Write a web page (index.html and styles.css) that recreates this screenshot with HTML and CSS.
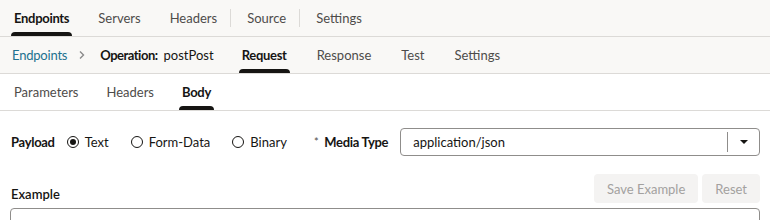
FILE: index.html
```html
<!DOCTYPE html>
<html>
<head>
<meta charset="utf-8">
<link rel="stylesheet" href="styles.css">
</head>
<body>
<div class="page">
  <nav class="bar bar-top">
    <a class="tab active">Endpoints</a>
    <a class="tab">Servers</a>
    <a class="tab">Headers</a>
    <span class="sep"></span>
    <a class="tab">Source</a>
    <span class="sep"></span>
    <a class="tab">Settings</a>
  </nav>
  <nav class="bar bar-second">
    <a class="crumb">Endpoints</a>
    <svg class="chev" width="8" height="10" viewBox="0 0 8 10"><path d="M2 1.5 L5.5 5 L2 8.5" fill="none" stroke="#8a8a8a" stroke-width="1.4"/></svg>
    <span class="op"><b>Operation:</b> postPost</span>
    <a class="tab active">Request</a>
    <a class="tab">Response</a>
    <a class="tab">Test</a>
    <a class="tab">Settings</a>
  </nav>
  <nav class="bar bar-third">
    <a class="tab">Parameters</a>
    <a class="tab">Headers</a>
    <a class="tab active">Body</a>
  </nav>
  <div class="form-row">
    <span class="label">Payload</span>
    <label class="radio checked"><span class="circle"></span>Text</label>
    <label class="radio"><span class="circle"></span>Form-Data</label>
    <label class="radio"><span class="circle"></span>Binary</label>
    <span class="label req"><span class="star">*</span>Media Type</span>
    <div class="select">
      <span class="value">application/json</span>
      <span class="arrow"><svg width="10" height="6" viewBox="0 0 10 6"><path d="M1 1 L9 1 L5 5 Z" fill="#161513"/></svg></span>
    </div>
  </div>
  <div class="example-row">
    <span class="label">Example</span>
    <div class="buttons">
      <button class="btn">Save Example</button>
      <button class="btn">Reset</button>
    </div>
  </div>
  <div class="editor"></div>
</div>
</body>
</html>
```
FILE: styles.css
```css
* { box-sizing: border-box; }
html, body { margin: 0; padding: 0; background: #fff; }
body {
  font-family: Lato, "Noto Sans", sans-serif;
  font-size: 13px;
  color: #161513;
  width: 770px;
  height: 220px;
  overflow: hidden;
}
.page { height: 220px; overflow: hidden; }
.bar {
  display: flex;
  align-items: stretch;
  border-bottom: 1px solid #dcdad7;
}
.bar-top { background: #f9f8f6; height: 37px; padding-left: 14px; }
.bar-second { background: #f9f8f6; height: 37px; padding-left: 12px; }
.bar-third { background: #fff; height: 37px; padding-left: 14px; }
.tab {
  position: relative;
  display: flex;
  align-items: center;
  color: #4e4c4a;
  margin-right: 30px;
  white-space: nowrap;
}
.bar-top .tab { margin-right: 29px; }
.bar-third .tab { margin-right: 28px; }
.tab.active { color: #161513; font-weight: 700; letter-spacing: -0.3px; }
.tab.active::after {
  content: "";
  position: absolute;
  left: -3px; right: -3px; bottom: 0;
  height: 4px;
  background: #161513;
  border-radius: 4px 4px 0 0;
}
.sep {
  width: 1px;
  background: #dcdad7;
  margin: 9px 16px 9px -16px;
}
.crumb { display: flex; align-items: center; color: #22718f; letter-spacing: -0.2px; }
.chev { align-self: center; margin: 0 14px 0 11px; }
.op { display: flex; align-items: center; gap: 6px; margin-right: 28px; }
.op b { font-weight: 700; letter-spacing: -0.5px; }
.form-row {
  display: flex;
  align-items: center;
  height: 28px;
  margin-top: 17px;
  padding: 0 10px 0 11px;
}
.label { font-weight: 700; letter-spacing: -0.3px; }
.form-row > .label:first-child { margin-right: 12px; }
.radio { display: flex; align-items: center; margin-right: 22px; color: #161513; }
.circle {
  width: 12px; height: 12px;
  border: 1.3px solid #161513;
  border-radius: 50%;
  margin-right: 6px;
  display: flex; align-items: center; justify-content: center;
}
.radio.checked .circle::after {
  content: ""; width: 6px; height: 6px; border-radius: 50%; background: #161513;
}
.req { display: flex; align-items: center; margin-left: 5px; }
.star { color: #4e4c4a; font-weight: 400; font-size: 11px; margin-right: 6px; align-self: flex-start; margin-top: 1px; }
.select {
  flex: 1;
  margin-left: 12px;
  height: 28px;
  border: 1px solid #8f8d8b;
  border-radius: 4px;
  display: flex;
  align-items: center;
}
.value { flex: 1; padding-left: 12px; }
.arrow {
  width: 32px; height: 20px;
  border-left: 1px solid #8f8d8b;
  display: flex; align-items: center; justify-content: center;
}
.example-row {
  display: flex;
  align-items: flex-end;
  justify-content: space-between;
  padding: 0 10px 0 11px;
  margin-top: 18px;
  height: 29px;
}
.example-row .label { font-weight: 600; line-height: 18px; letter-spacing: 0; }
.buttons { display: flex; gap: 4px; }
.btn {
  font: inherit;
  background: #f4f3f2;
  color: #a3a19f;
  border: none;
  border-radius: 4px;
  height: 29px;
  padding: 0 13px;
}
.editor {
  margin: 5px 10px 0 10px;
  height: 30px;
  border: 1px solid #8f8d8b;
  border-radius: 4px;
}
```
